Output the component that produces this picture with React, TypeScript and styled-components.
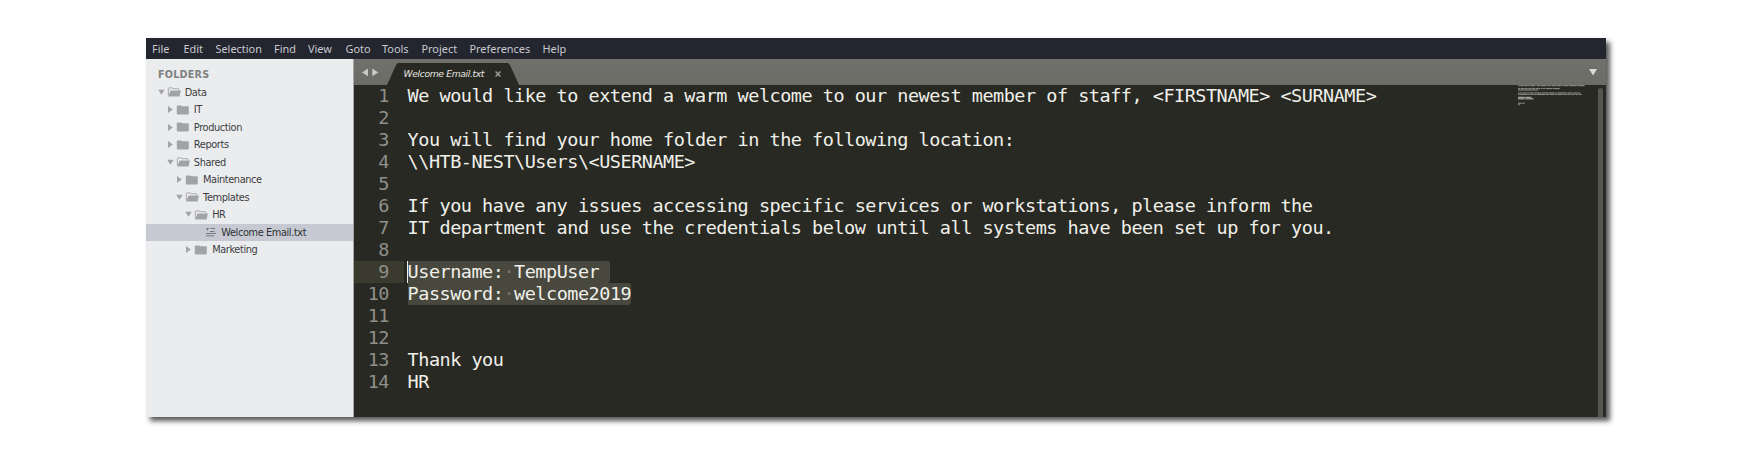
import React from "react";
import styled, { createGlobalStyle } from "styled-components";

const GlobalStyle = createGlobalStyle`
  * { box-sizing: border-box; }
  body { margin: 0; background: #fff; }
`;

const Page = styled.main`
  height: 455px;
  padding: 38px 146px;
  overflow: hidden;
`;

const Window = styled.div`
  width: 1460px;
  height: 379px;
  display: flex;
  flex-direction: column;
  background: #282923;
  box-shadow: 4px 4px 5px rgba(0, 0, 0, 0.66);
`;

const MenuBar = styled.nav`
  height: 21px;
  flex: none;
  display: flex;
  gap: 13px;
  padding-left: 6px;
  background: #23252f;
  color: #c9cbcf;
  font: 10.9px/22px "Noto Sans", sans-serif;
`;

const MenuItem = styled.span<{ $w: number }>`
  width: ${(p) => p.$w}px;
  white-space: nowrap;
`;

const Body = styled.div`
  flex: 1;
  display: flex;
  min-height: 0;
`;

const Sidebar = styled.aside`
  width: 208px;
  flex: none;
  padding-top: 7px;
  background: #ebecee;
  border-right: 1px solid #a5a6a5;
  font-family: "DejaVu Sans", sans-serif;
`;

const SideTitle = styled.h2`
  margin: 0;
  height: 17.7px;
  padding-left: 12px;
  color: #7f8080;
  font: bold 9.6px/18px "DejaVu Sans", sans-serif;
  letter-spacing: 0.25px;
`;

const TreeRow = styled.div<{ $depth: number; $selected?: boolean }>`
  height: 17.5px;
  display: flex;
  align-items: center;
  padding-left: ${(p) => 12 + p.$depth * 9.15}px;
  background: ${(p) => (p.$selected ? "#c6c9d1" : "transparent")};
  color: ${(p) => (p.$selected ? "#303236" : "#3c3d3e")};
  font-size: 9.8px;
  letter-spacing: -0.4px;
  line-height: 17px;
  white-space: nowrap;
`;

const ArrowIcon = styled.svg`
  width: 7px;
  height: 7px;
  flex: none;
  margin-right: 2px;
`;

const KindIcon = styled.svg`
  width: 14px;
  height: 10px;
  flex: none;
  margin-right: 3.7px;
`;

const Editor = styled.section`
  flex: 1;
  display: flex;
  flex-direction: column;
  min-width: 0;
`;

const TabBar = styled.div`
  height: 26px;
  flex: none;
  display: flex;
  align-items: flex-end;
  background: linear-gradient(#70716c, #6b6c66);
`;

const NavArrows = styled.svg`
  width: 17px;
  height: 26px;
  margin-left: 8px;
`;

const Tab = styled.div`
  width: 132px;
  height: 22px;
  margin-left: 8px;
  padding-left: 16.5px;
  display: flex;
  align-items: center;
  background: #282923;
  clip-path: polygon(0 100%, 9px 2px, 11px 0, 121px 0, 123px 2px, 132px 100%);
  color: #e6e6e2;
  font: italic 9.2px/22px "DejaVu Sans", sans-serif;
  letter-spacing: -0.35px;
  white-space: nowrap;
`;

const TabName = styled.span`
  width: 82px;
`;

const CloseIcon = styled.svg`
  width: 6px;
  height: 6px;
  margin-left: 9.5px;
`;

const TabMenu = styled.svg`
  width: 8px;
  height: 26px;
  margin: 0 9px 0 auto;
`;

const EditorBody = styled.div`
  flex: 1;
  display: flex;
  min-height: 0;
`;

const CodeArea = styled.div`
  flex: 1;
  font-family: "DejaVu Sans Mono", monospace;
  font-size: 18.5px;
  letter-spacing: -0.493px;
  line-height: 22px;
`;

const CodeLine = styled.div`
  height: 22px;
  display: flex;
`;

const LineNumber = styled.span<{ $active?: boolean }>`
  width: 50px;
  padding-right: 15px;
  margin-right: 3.6px;
  text-align: right;
  color: #8f908a;
  background: ${(p) => (p.$active ? "#3a3a2e" : "transparent")};
`;

const Code = styled.span<{ $selected?: boolean; $first?: boolean }>`
  height: 22px;
  white-space: pre;
  color: #f0f0ea;
  background: ${(p) => (p.$selected ? "#48483e" : "transparent")};
  border-radius: 0 3px 3px 0;
  box-shadow: ${(p) => (p.$first ? "-1px 0 0 #f4f4ee" : "none")};
`;

const SpaceMark = styled.span`
  color: #77776c;
`;

const Minimap = styled.svg`
  width: 80px;
  height: 24px;
  flex: none;
`;

const ScrollTrack = styled.div`
  width: 8px;
  padding: 3px 3px 0 0;
  flex: none;
`;

const ScrollThumb = styled.div`
  height: 100%;
  background: #555650;
  border-radius: 3px 3px 0 0;
`;

type Kind = "open" | "closed" | "file";

const menu: [string, number][] = [
  ["File", 18.5],
  ["Edit", 19],
  ["Selection", 45.5],
  ["Find", 21],
  ["View", 24.5],
  ["Goto", 23.5],
  ["Tools", 26.5],
  ["Project", 35],
  ["Preferences", 60],
  ["Help", 24],
];

const tree: { name: string; depth: number; kind: Kind }[] = [
  { name: "Data", depth: 0, kind: "open" },
  { name: "IT", depth: 1, kind: "closed" },
  { name: "Production", depth: 1, kind: "closed" },
  { name: "Reports", depth: 1, kind: "closed" },
  { name: "Shared", depth: 1, kind: "open" },
  { name: "Maintenance", depth: 2, kind: "closed" },
  { name: "Templates", depth: 2, kind: "open" },
  { name: "HR", depth: 3, kind: "open" },
  { name: "Welcome Email.txt", depth: 4, kind: "file" },
  { name: "Marketing", depth: 3, kind: "closed" },
];

const lines = [
  "We would like to extend a warm welcome to our newest member of staff, <FIRSTNAME> <SURNAME>",
  "",
  "You will find your home folder in the following location:",
  "\\\\HTB-NEST\\Users\\<USERNAME>",
  "",
  "If you have any issues accessing specific services or workstations, please inform the",
  "IT department and use the credentials below until all systems have been set up for you.",
  "",
  "Username: TempUser ",
  "Password: welcome2019",
  "",
  "",
  "Thank you",
  "HR",
];

function Arrow({ kind }: { kind: Kind }) {
  return (
    <ArrowIcon viewBox="0 0 7 7">
      {kind === "open" && <path d="M.2 .8h6.500L3.500 5.800z" fill="#a2a3a4" />}
      {kind === "closed" && <path d="M1 .1v6.800L5.800 3.500z" fill="#a2a3a4" />}
    </ArrowIcon>
  );
}

function Icon({ kind }: { kind: Kind }) {
  return (
    <KindIcon viewBox="0 0 14 10">
      {kind === "closed" && (
        <path d="M.8 1.800V1Q.8.400 1.600.400h3.800L6.300 1.200h5.700q.8 0 .8.8v6.600q0 .8-.8.8H1.600Q.8 9.400.8 8.600z" fill="#a2a3a4" />
      )}
      {kind === "open" && (
        <>
          <path d="M1.300 8.500V1.500q0-.6.600-.6h3.300l1 .8h5q.6 0 .6.600V3.500" fill="none" stroke="#a8a9aa" />
          <path d="M3.500 3.500h10.400L12.500 9.400H1.200z" fill="#a2a3a4" />
        </>
      )}
      {kind === "file" && (
        <path d="M2 1.500h3M6.500 1.500H11M3.500 1.500V3.500M6 4.500h4.500M2 6.500h10M2 8.800h8" stroke="#77797e" fill="none" />
      )}
    </KindIcon>
  );
}

function CodeText({ text }: { text: string }) {
  const [label, value] = text.split(": ");
  return (
    <>
      {label}:<SpaceMark>·</SpaceMark>
      {value}
    </>
  );
}

const words = lines.flatMap((line, row) =>
  [...line.matchAll(/\S+/g)].map((m) => ({ row, start: m.index ?? 0, length: m[0].length })),
);

export default function App() {
  return (
    <Page>
      <GlobalStyle />
      <Window>
        <MenuBar>
          {menu.map(([name, w]) => (
            <MenuItem key={name} $w={w}>{name}</MenuItem>
          ))}
        </MenuBar>
        <Body>
          <Sidebar>
            <SideTitle>FOLDERS</SideTitle>
            {tree.map((t) => (
              <TreeRow key={t.name} $depth={t.depth} $selected={t.kind === "file"}>
                <Arrow kind={t.kind} />
                <Icon kind={t.kind} />
                {t.name}
              </TreeRow>
            ))}
          </Sidebar>
          <Editor>
            <TabBar>
              <NavArrows viewBox="0 0 17 26">
                <path d="M6 9.600v7.600L0 13.400zM10.300 9.600v7.600l6-3.800z" fill="#c8c8c6" />
              </NavArrows>
              <Tab>
                <TabName>Welcome Email.txt</TabName>
                <CloseIcon viewBox="0 0 6 6">
                  <path d="M.6.6l4.800 4.800M5.400.6L.6 5.400" stroke="#a0a19b" strokeWidth="1.400" />
                </CloseIcon>
              </Tab>
              <TabMenu viewBox="0 0 8 26">
                <path d="M0 10h8l-4 6.500z" fill="#d8d8d6" />
              </TabMenu>
            </TabBar>
            <EditorBody>
              <CodeArea>
                {lines.map((text, i) => {
                  const selected = i === 8 || i === 9;
                  return (
                    <CodeLine key={i}>
                      <LineNumber $active={i === 8}>{i + 1}</LineNumber>
                      <Code $selected={selected} $first={i === 8}>
                        {selected ? <CodeText text={text} /> : text}
                      </Code>
                    </CodeLine>
                  );
                })}
              </CodeArea>
              <Minimap viewBox="0 0 80 24">
                {words.map((w) => (
                  <rect
                    key={`${w.row}-${w.start}`}
                    x={w.start * 0.73}
                    y={w.row * 1.47}
                    width={w.length * 0.73 + 0.2}
                    height={1.2}
                    fill={w.row === 8 || w.row === 9 ? "#a5a69c" : "#85867e"}
                  />
                ))}
              </Minimap>
              <ScrollTrack>
                <ScrollThumb />
              </ScrollTrack>
            </EditorBody>
          </Editor>
        </Body>
      </Window>
    </Page>
  );
}
